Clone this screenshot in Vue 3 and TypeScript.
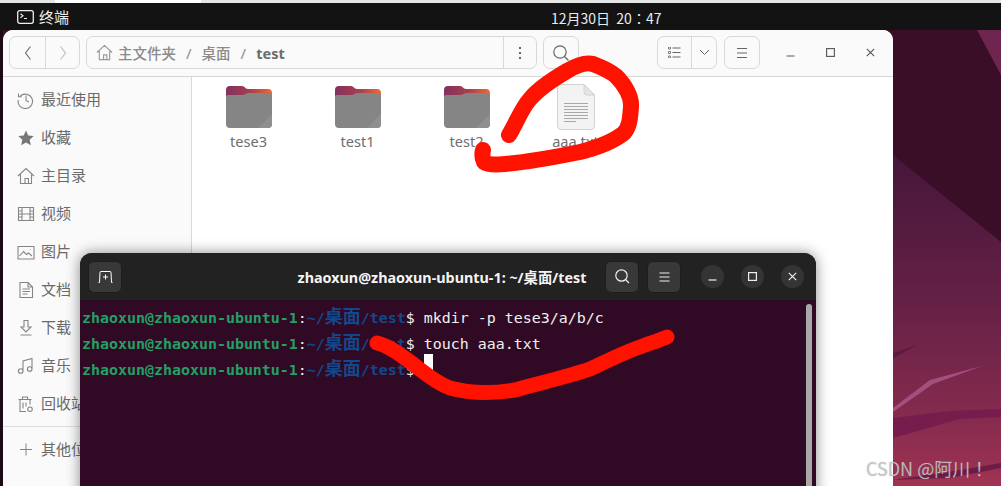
<script setup lang="ts">
interface Side { label: string; d: string; solid?: boolean }
const sideItems: Side[] = [
  { label: '最近使用', d: 'M3.2 5.2A7.2 7.2 0 1 1 1.2 9M1.5 2.5v3.2h3.2M9 4.5V9.5l3 1.5' },
  { label: '收藏', d: 'M9 1.5l2.3 5 5.4.6-4 3.7 1.1 5.4L9 13.5l-4.800 2.700 1.100-5.400-4-3.700 5.400-.6z', solid: true },
  { label: '主目录', d: 'M1 9l8-7.500L17 9M3.500 7.500V16.500h11V7.500M8 16.500v-5h3.500v5' },
  { label: '视频', d: 'M1.500 2.500h15v13h-15zM5 2.500v13M13 2.500v13M5 9h8M1.500 6h3.500M1.500 9h3.500M1.500 12h3.500M13 6h3.500M13 9h3.500M13 12h3.500' },
  { label: '图片', d: 'M1 3.500h16v12.500H1zM2.500 13l4-4.500 3 3 2-1.500 3.500 3M13.500 6.500h.5' },
  { label: '文档', d: 'M3 1.500h8l4.500 4.500v10.500H3zM11 1.500v4.500h4.500M5.500 8h7.500M5.500 10.500h7.500M5.500 13h5' },
  { label: '下载', d: 'M7 1.500h4v6.500h3l-5 5-5-5h3zM3.500 16h11' },
  { label: '音乐', d: 'M6 14V4l9-2.500V12M6 14a2.300 2.300 0 1 1-4.600 0a2.300 2.300 0 0 1 4.600 0zM15 12a2.300 2.300 0 1 1-4.600 0a2.300 2.300 0 0 1 4.600 0z' },
  { label: '回收站', d: 'M1.500 4.500h13M5.500 4.500V2h5v2.500M3 4.500v12h6M13 4.500v5M6 7.500v6M9 7.500v4M13 12a2.200 2.200 0 1 1 0 4.500a2.200 2.200 0 0 1 0-4.500z' },
]
const files = [
  { name: 'tese3', kind: 'folder' },
  { name: 'test1', kind: 'folder' },
  { name: 'test2', kind: 'folder' },
  { name: 'aaa.txt', kind: 'file' },
]
const prompts = ['mkdir -p tese3/a/b/c', 'touch aaa.txt', '']
</script>

<template>
  <div class="desktop">
    <div class="strip"><span class="strip-tab"></span></div>
    <header class="topbar">
      <svg class="term-glyph" width="17" height="14" viewBox="0 0 17 14"><rect x=".7" y=".7" width="15.600" height="12.600" rx="2" fill="none" stroke="#eee" stroke-width="1.300"/><path d="M3.500 3.800l2.500 2-2.500 2M7 8.500h3" fill="none" stroke="#eee" stroke-width="1.100"/></svg>
      <span class="app-name">终端</span>
      <span class="clock">12月30日&nbsp;&nbsp;20：47</span>
    </header>

    <main class="workspace">
      <svg class="wallpaper" width="1001" height="456" viewBox="0 30 1001 456" preserveAspectRatio="none">
        <defs>
          <linearGradient id="wall" x1="0" y1="0" x2="0" y2="1">
            <stop offset="0" stop-color="#45163a"/>
            <stop offset=".45" stop-color="#642145"/>
            <stop offset=".8" stop-color="#862b4e"/>
            <stop offset="1" stop-color="#a03353"/>
          </linearGradient>
          <linearGradient id="fold" x1="0" y1="0" x2="1" y2="0">
            <stop offset="0" stop-color="#84305f"/>
            <stop offset=".55" stop-color="#a8404f"/>
            <stop offset="1" stop-color="#ee6a34"/>
          </linearGradient>
        </defs>
        <rect x="0" y="150" width="1001" height="336" fill="url(#wall)"/>
        <path d="M0 30H1001V242L893 155 860 150H0z" fill="#3b0e27"/>
        <path d="M977 30H1001V75z" fill="#6e2550"/>
        <path d="M893 353L917 345 893 358z" fill="#5a1a42"/>
        <path d="M893 408L930 380 982 366 933 384 893 412z" fill="#a2507f"/>
        <path d="M893 418L950 411 1001 409V417L960 419 893 438z" fill="#771d4d"/>
        <path d="M893 480L960 470 1001 463V468L950 478z" fill="#6d1c45"/>
        <rect x="0" y="30" width="3" height="456" fill="#1e0a16"/>
      </svg>

      <section class="files-win">
        <div class="files-head">
          <div class="tool nav">
            <button class="tool-cell nav-cell"><svg width="10" height="16" viewBox="0 0 10 16"><path d="M7.500 1.500L2.500 8l5 6.500" fill="none" stroke="#666" stroke-width="1.100"/></svg></button>
            <button class="tool-cell nav-cell"><svg width="10" height="16" viewBox="0 0 10 16"><path d="M2.500 1.500L7.500 8l-5 6.500" fill="none" stroke="#bbb" stroke-width="1.100"/></svg></button>
          </div>
          <div class="pathbar">
            <div class="crumbs">
              <svg width="17" height="17" viewBox="0 0 18 18"><path d="M1 9l8-7.500L17 9M3.500 7.500V16.500h11V7.500M8 16.500v-5h3.500v5" fill="none" stroke="#999" stroke-width="1.200"/></svg>
              <span class="crumb first">主文件夹</span><span class="slash">/</span>
              <span class="crumb">桌面</span><span class="slash">/</span>
              <span class="crumb strong">test</span>
            </div>
            <button class="tool-cell more"><svg width="4" height="14" viewBox="0 0 4 14"><path d="M1 1h2v2H1zM1 6h2v2H1zM1 11h2v2H1z" fill="#666"/></svg></button>
          </div>
          <button class="tool search">
            <svg width="18" height="18" viewBox="0 0 18 18"><circle cx="8" cy="8" r="6.200" fill="none" stroke="#666" stroke-width="1.200"/><path d="M12.500 12.500L16.500 16.500" stroke="#666" stroke-width="1.200"/></svg>
          </button>
          <div class="tool viewsw">
            <button class="tool-cell list"><svg width="13" height="11" viewBox="0 0 13 11"><path d="M4.500 1h8M4.500 5.500h8M4.500 10h8" stroke="#666" stroke-width="1"/><path d="M.5.000h2v2h-2zM.5 4.500h2v2h-2zM.5 9h2v2h-2z" fill="none" stroke="#666" stroke-width=".8"/></svg></button>
            <button class="tool-cell chev"><svg width="11" height="7" viewBox="0 0 11 7"><path d="M1 1l4.500 4.500L10 1" fill="none" stroke="#666" stroke-width="1"/></svg></button>
          </div>
          <button class="tool menu"><svg width="12" height="10" viewBox="0 0 12 10"><path d="M1 .5h10M1 5h10M1 9.500h10" stroke="#666" stroke-width="1"/></svg></button>
          <div class="wctl">
            <svg width="9" height="9" viewBox="0 0 9 9"><path d="M.5 8h8" stroke="#555" stroke-width="1.100"/></svg>
            <svg width="9" height="9" viewBox="0 0 9 9"><rect x=".6" y=".6" width="7.800" height="7.800" fill="none" stroke="#555" stroke-width="1.100"/></svg>
            <svg width="9" height="9" viewBox="0 0 9 9"><path d="M.8.800l7.400 7.400M8.200.800L.8 8.200" stroke="#555" stroke-width="1.100"/></svg>
          </div>
        </div>
        <div class="files-body">
          <aside class="sidebar">
            <div v-for="s in sideItems" :key="s.label" class="side-row">
              <svg width="18" height="18" viewBox="0 0 18 18"><path :d="s.d" :fill="s.solid ? '#777' : 'none'" :stroke="s.solid ? 'none' : '#858585'" stroke-width="1.100"/></svg>
              <span>{{ s.label }}</span>
            </div>
            <div class="side-sep"></div>
            <div class="side-row">
              <svg width="18" height="18" viewBox="0 0 18 18"><path d="M9 2.500v12M3 8.500h12" stroke="#858585" stroke-width="1"/></svg>
              <span>其他位置</span>
            </div>
          </aside>
          <div class="grid">
            <div v-for="f in files" :key="f.name" class="cell">
              <div class="thumb">
                <svg v-if="f.kind === 'folder'" width="46" height="42" viewBox="0 0 46 42">
                  <path d="M0 4a4 4 0 0 1 4-4h12c3 0 3 3 6 3h20a4 4 0 0 1 4 4v14H0z" fill="url(#fold)"/>
                  <path d="M0 11a2 2 0 0 1 2-2h14c3 0 4-2 7-2h19a4 4 0 0 1 4 4v27a4 4 0 0 1-4 4H4a4 4 0 0 1-4-4z" fill="#858585"/>
                  <path d="M46 28v10a4 4 0 0 1-4 4H32z" fill="#8f8f8f"/>
                </svg>
                <svg v-else width="38" height="46" viewBox="0 0 38 46">
                  <path d="M4.500.500H27L37.500 11V42a3.500 3.500 0 0 1-3.500 3.500H4A3.500 3.500 0 0 1 .5 42V4A3.500 3.500 0 0 1 4.500.5z" fill="#f3f3f3" stroke="#d2d2d2"/>
                  <path d="M27 .5V8a3 3 0 0 0 3 3h7.500z" fill="#e4e4e4" stroke="#d2d2d2"/>
                  <path d="M7 19.500h24M7 22.500h24M7 25.500h24M7 28.500h24M7 31.500h24M7 34.500h24M7 37.500h12" stroke="#a8a8a8" stroke-width="1"/>
                </svg>
              </div>
              <span class="fname">{{ f.name }}</span>
            </div>
          </div>
        </div>
      </section>

      <section class="term-win">
        <div class="term-head">
          <button class="tbtn"><svg width="15" height="12" viewBox="0 0 15 12"><path d="M.5 11.500h1L2 1.500a1 1 0 0 1 1-1h9a1 1 0 0 1 1 1l.5 10h1M7.500 3.500v5M5 6h5" fill="none" stroke="#fff" stroke-width="1"/></svg></button>
          <div class="term-title">zhaoxun@zhaoxun-ubuntu-1: ~/桌面/test</div>
          <button class="tbtn"><svg width="15" height="15" viewBox="0 0 15 15"><circle cx="6.500" cy="6.500" r="5.700" fill="none" stroke="#eee" stroke-width="1.200"/><path d="M10.500 10.500L14 14" stroke="#eee" stroke-width="1.200"/></svg></button>
          <button class="tbtn"><svg width="11" height="10" viewBox="0 0 11 10"><path d="M.5 1h10M.5 5h10M.5 9h10" stroke="#eee" stroke-width="1"/></svg></button>
          <div class="round-group">
            <button class="round"><svg width="9" height="9" viewBox="0 0 9 9"><path d="M.5 8h8" stroke="#eee" stroke-width="1.200"/></svg></button>
            <button class="round"><svg width="9" height="9" viewBox="0 0 9 9"><rect x=".6" y=".6" width="7.800" height="7.800" fill="none" stroke="#eee" stroke-width="1.200"/></svg></button>
            <button class="round"><svg width="9" height="9" viewBox="0 0 9 9"><path d="M.8.800l7.400 7.400M8.200.800L.8 8.200" stroke="#eee" stroke-width="1.200"/></svg></button>
          </div>
        </div>
        <div class="term-body">
          <div v-for="(cmd, i) in prompts" :key="i" class="term-line">
            <span class="g">zhaoxun@zhaoxun-ubuntu-1</span><span class="w">:</span><span class="b">~/<span class="wide">桌面</span>/test</span><span class="w">$ {{ cmd }}</span><span v-if="!cmd" class="cursor"></span>
          </div>
          <div class="scrollbar"></div>
        </div>
      </section>

      <svg class="ink" width="1001" height="456" viewBox="0 30 1001 456" fill="none" stroke="#ff1200" stroke-linecap="round" stroke-linejoin="round">
        <path stroke-width="16" d="M509 135C516 124 521 109 530 99C540 87 555 78 567 71C577 65 586 62 593 64C601 67 611 72 616 76C625 85 632 97 631 107C630 118 630 126 624 133C614 141 600 147 580 152C555 157 530 162 505 164C495 165 488 165 484 162C482 158 482 154 483 150"/>
        <path stroke-width="15" d="M377 343C390 346 402 356 413 364C425 373 436 383 450 388C468 393 490 394 515 390C540 383 570 376 590 369C605 362 625 352 640 347C650 343 658 341 667 337"/>
      </svg>

      <div class="watermark">CSDN @阿川！</div>
    </main>
  </div>
</template>

<style>
html, body { margin: 0; background: #fff; overflow: hidden; }
</style>

<style scoped>
.desktop {
  width: 1001px;
  height: 486px;
  display: flex;
  flex-direction: column;
  overflow: hidden;
  font-family: "Noto Sans", "Noto Sans CJK SC", sans-serif;
}
button { border: 0; padding: 0; background: none; font: inherit; display: flex; align-items: center; justify-content: center; }
.strip { height: 3px; flex: none; background: #e6e6e6; padding-left: 55px; }
.strip-tab { display: block; width: 146px; height: 3px; background: #fff; }
.topbar { height: 27px; flex: none; background: #131313; color: #eee; display: flex; align-items: center; position: relative; padding-left: 17px; font-size: 14px; }
.term-glyph { margin-right: 5px; }
.app-name { font-size: 15px; }
.clock { position: absolute; left: 551px; top: 4px; line-height: 22px; font-family: "Noto Sans CJK TC", sans-serif; font-size: 14px; color: #e6eef2; }

.workspace { flex: 1; position: relative; overflow: hidden; }
.wallpaper { position: absolute; inset: 0; }

.files-win { position: absolute; left: 3px; top: 0; width: 890px; height: 470px; background: #fff; border-radius: 10px 10px 0 0; display: flex; flex-direction: column; overflow: hidden; }
.files-head { height: 47px; flex: none; box-sizing: border-box; background: #fafafa; border-bottom: 1px solid #d6d6d6; display: flex; align-items: flex-start; padding: 6px 0 0 6px; }
.tool { height: 33px; box-sizing: border-box; border: 1px solid #d8d8d8; border-radius: 7px; background: #fafafa; display: flex; align-items: stretch; }
.tool-cell { flex: none; }
.nav { width: 71px; }
.nav-cell { width: 35px; }
.nav-cell + .nav-cell { border-left: 1px solid #d8d8d8; }
.pathbar { width: 451px; height: 33px; margin-left: 6px; box-sizing: border-box; border: 1px solid #d8d8d8; border-radius: 7px; display: flex; align-items: stretch; }
.crumbs { flex: 1; display: flex; align-items: center; padding-left: 9px; font-size: 14.500px; color: #8b8b8b; font-weight: 500; }
.crumb.first { margin-left: 5px; }
.slash { margin: 0 10px; color: #999; }
.crumb.strong { font-weight: 700; color: #6c6c6c; }
.more { width: 33px; border-left: 1px solid #d8d8d8; }
.search { width: 36px; margin-left: 6px; align-items: center; }
.viewsw { width: 60px; margin-left: 78px; }
.list { width: 34px; border-right: 1px solid #d8d8d8; }
.chev { flex: 1; }
.menu { width: 36px; margin-left: 7px; align-items: center; }
.wctl { display: flex; align-items: center; height: 33px; margin-left: 26px; gap: 31px; }

.files-body { flex: 1; display: flex; min-height: 0; }
.sidebar { width: 188px; flex: none; background: #fafafa; border-right: 1px solid #d8d8d8; padding-top: 2px; display: flex; flex-direction: column; }
.side-row { height: 38px; flex: none; display: flex; align-items: center; padding-left: 14px; gap: 6px; font-size: 15px; color: #6a6a6a; }
.side-row svg { margin-top: 3px; }
.side-sep { height: 1px; background: #dedede; margin: 5px 0 2px; flex: none; }
.grid { flex: 1; display: flex; align-items: flex-start; padding: 7px 0 0 2px; }
.cell { width: 109px; display: flex; flex-direction: column; align-items: center; }
.thumb { height: 46px; display: flex; align-items: center; justify-content: center; }
.fname { margin-top: 2px; line-height: 18px; font-size: 14.600px; color: #6e6e6e; }

.term-win { position: absolute; left: 80px; top: 223px; width: 736px; height: 263px; border-radius: 12px 12px 0 0; overflow: hidden; background: #300a24; display: flex; flex-direction: column; box-shadow: 0 0 14px rgba(0,0,0,.45); }
.term-head { height: 47px; flex: none; background: #222; display: flex; align-items: center; padding: 0 12px 0 8px; gap: 8px; }
.tbtn { width: 34px; height: 32px; background: #383838; border-radius: 6px; flex: none; box-shadow: 0 0 0 1px #1d1d1d inset; }
.term-title { flex: 1; box-sizing: border-box; padding-left: 157px; text-align: center; color: #f4f4f4; font-size: 14.350px; font-weight: 700; white-space: nowrap; }
.round-group { display: flex; gap: 17px; margin-left: 12px; }
.round { width: 23px; height: 23px; border-radius: 50%; background: #343434; }
.term-body { flex: 1; position: relative; padding: 5px 0 0 2px; font-family: "DejaVu Sans Mono", monospace; font-size: 14.950px; color: #ececec; }
.term-line { height: 26px; line-height: 26px; white-space: pre; position: relative; }
.g { color: #23a065; font-weight: 700; }
.b { color: #12488b; font-weight: 700; }
.w { color: #efefef; }
.wide { font-family: "Noto Sans CJK SC", sans-serif; font-size: 18px; line-height: 20px; }
.cursor { display: inline-block; width: 9px; height: 20px; background: #fff; vertical-align: top; margin-top: -3px; }
.scrollbar { position: absolute; right: 4px; top: 4px; bottom: 0; width: 6px; background: #a8a8a8; border-radius: 3px 3px 0 0; }

.ink { position: absolute; inset: 0; pointer-events: none; }
.watermark { position: absolute; left: 866px; top: 426px; font-family: "Noto Sans CJK TC", sans-serif; font-size: 18px; line-height: 24px; color: rgba(200,200,200,.85); text-shadow: 0 0 1px rgba(120,120,120,.5); white-space: nowrap; }
</style>
